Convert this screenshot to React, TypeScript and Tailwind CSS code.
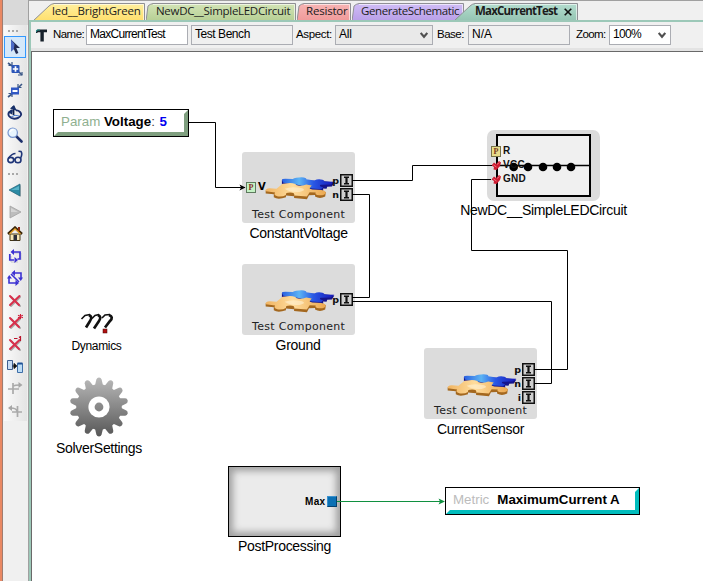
import React from "react";

type Kids = { children?: React.ReactNode };

const fontUi = "font-['Open_Sans','Noto_Sans',sans-serif]";
const fontArial = "font-['Liberation_Sans',Arial,sans-serif]";

/* ---------- tabs ---------- */

function Tab({ id, w, overlap, from, to, label, labelClass, active }: {
  id: string; w: number; overlap: string; from: string; to: string; label: string; labelClass: string; active?: boolean;
}) {
  const slant = id === "t1" || active ? 20 : 6;
  const d = `M0 18 L${slant - 4} 3 Q${slant - 2} 1 ${slant + 1} 0.5 L${w - 1.5} 0.5 L${w - 1.5} 18`;
  return (
    <div className={`relative h-[18px] shrink-0 ${overlap}`}>
      <svg width={w} height="18" className="block">
        <defs>
          <linearGradient id={id} x1="0" y1="0" x2="0" y2="1">
            <stop offset="0" stopColor={from} />
            <stop offset="1" stopColor={to} />
          </linearGradient>
        </defs>
        <path d={d} fill={`url(#${id})`} stroke="#8f8f94" strokeWidth="1" />
        <path d={`M${slant + 1} 1.5 H${w - 2.5} V18`} fill="none" stroke="#fff" strokeOpacity="0.6" />
      </svg>
      <span className={`absolute -top-px whitespace-nowrap text-[11.5px] leading-[18px] text-[#1c1c1c] ${labelClass}`}>{label}</span>
      {active && (
        <svg className="absolute top-[5px] left-[110px]" width="8" height="8" viewBox="0 0 8 8">
          <path d="M0.7 0.7 L7.3 7.3 M7.3 0.7 L0.7 7.3" stroke="#111" strokeWidth="1.6" />
        </svg>
      )}
    </div>
  );
}

function Tabs() {
  return (
    <div className={`flex h-[17px] items-start overflow-hidden pl-[4px] ${fontUi}`}>
      <Tab id="t1" w={113} overlap="" from="#fff0a0" to="#ffdf6c" label="led__BrightGreen" labelClass="left-[19px] tracking-[-0.2px]" />
      <Tab id="t2" w={151} overlap="" from="#d3e4b6" to="#b6cf94" label="NewDC__SimpleLEDCircuit" labelClass="left-[10px] tracking-[-0.3px]" />
      <Tab id="t3" w={55} overlap="" from="#f8b4b4" to="#f09a9a" label="Resistor" labelClass="left-[9px] tracking-[-0.2px]" />
      <Tab id="t4" w={113} overlap="" from="#d0bdf6" to="#b99fe8" label="GenerateSchematic" labelClass="left-[9px] tracking-[-0.4px]" />
      <Tab id="t5" w={125} overlap="-ml-[11px]" from="#b4ddcf" to="#94c4b2" label="MaxCurrentTest" labelClass="left-[21px] font-bold tracking-[-0.8px]" active />
    </div>
  );
}

/* ---------- property bar ---------- */

function Chevron() {
  return (
    <svg width="8" height="7" viewBox="0 0 8 7" className="mt-[2px] shrink-0">
      <path d="M0.7 1 L4 4.8 L7.3 1" fill="none" stroke="#505050" strokeWidth="2.1" />
    </svg>
  );
}

function Field({ cls, children }: Kids & { cls: string }) {
  return (
    <div className={`flex h-[20px] shrink-0 items-center justify-between border border-[#abadb3] pb-[2px] pl-[3px] ${cls}`}>
      {children}
    </div>
  );
}

function PropertyBar() {
  return (
    <div className={`flex h-[26px] items-center bg-[#f0f0f0] pl-[5px] text-[12px] whitespace-nowrap text-black ${fontArial}`}>
      <svg width="12" height="13" viewBox="0 0 12 13" className="shrink-0">
        <path d="M0 4 V2 Q0 0.5 2 0.5 H11 V3.2 H7.8 V12.5 H4.4 V3.2 H2 L1 4Z" fill="#16202a" />
        <path d="M0 3 L1 1 H4" fill="none" stroke="#2a9c94" />
      </svg>
      <span className="ml-[5px] w-[33px] shrink-0 text-[11.5px] tracking-[-0.55px]">Name:</span>
      <Field cls="w-[102px] bg-white"><span className="tracking-[-0.7px]">MaxCurrentTest</span></Field>
      <Field cls="ml-[3px] w-[102px] bg-[#f0f0f0]"><span className="tracking-[-0.45px]">Test Bench</span></Field>
      <span className="ml-[3px] w-[39px] shrink-0 text-[11.5px] tracking-[-0.35px]">Aspect:</span>
      <Field cls="w-[98px] bg-[#e9e9e9] pr-[4px]"><span className="tracking-[-0.2px]">All</span><Chevron /></Field>
      <span className="ml-[4px] w-[31px] shrink-0 text-[11.5px] tracking-[-0.5px]">Base:</span>
      <Field cls="w-[102px] bg-[#f0f0f0]"><span>N/A</span></Field>
      <span className="ml-[6px] w-[33px] shrink-0 text-[11.5px] tracking-[-0.6px]">Zoom:</span>
      <Field cls="w-[62px] bg-white pr-[4px]"><span className="tracking-[-0.7px]">100%</span><Chevron /></Field>
    </div>
  );
}

/* ---------- left tool strip ---------- */

function Tool({ children, on }: Kids & { on?: boolean }) {
  return (
    <div className={`flex h-[22px] w-[22px] items-center justify-center ${on ? "border border-[#3399ff] bg-[#d5e8fa]" : ""}`}>
      <svg width="16" height="16" viewBox="0 0 16 16" className="shrink-0" fill="none">{children}</svg>
    </div>
  );
}

function Grip() {
  return (
    <div className="flex h-[11px] items-center gap-[2px] pl-[4px]">
      {[0, 1, 2].map((i) => <i key={i} className="h-[2px] w-[2px] bg-[#a8a8a8]" />)}
    </div>
  );
}

function Cross() {
  return (
    <g strokeLinecap="round">
      <path d="M4 5 L13 14 M13 5 L4 14" stroke="#aaa" strokeWidth="2" />
      <path d="M3 4 L12 13 M12.5 4 L3 13" stroke="#d8304c" strokeWidth="2" />
    </g>
  );
}

function Cycle() {
  return (
    <g>
      <path d="M6 5 H14 V12 M11 14 H4 V8" stroke="#c4c4d0" strokeWidth="1" />
      <g stroke="#3c32d2" strokeWidth="1.7">
        <path d="M5 4 H13 V11 H10.5" />
        <path d="M7 12 H2.8 V6" />
        <path d="M7 1 L3.5 4 L7 7Z M7.5 9 L11 12 L7.5 15Z" fill="#3c32d2" stroke="none" />
      </g>
    </g>
  );
}

function ToolStrip() {
  return (
    <div className="flex w-[23px] flex-col bg-gradient-to-r from-[#fafafa] to-[#e4e4e4]">
      <Grip />
      <Tool on>
        <path d="M4 0.5 V12.5 L6.8 10 L9 15 L11.4 13.9 L9.3 9 H13Z" fill="#222b52" />
        <path d="M4 0.5 V12.5 L6.8 10 L7.5 5Z" fill="#4c6cc8" />
      </Tool>
      <Tool>
        <path d="M1 2 L5 5 M12 11 L15 14" stroke="#3a5686" strokeWidth="1.6" />
        <path d="M5 1 V4.5 H1.5 M15 11 V14 H11" stroke="#3a5686" strokeWidth="1.2" />
        <rect x="4.5" y="4" width="8" height="8" rx="1" fill="#2b55b8" /><path d="M8.5 5.3 V10.7 M5.8 8 H11.2" stroke="#fff" strokeWidth="1.7" />
      </Tool>
      <Tool>
        <path d="M1 14 L5 11 M11 5 L15 1" stroke="#3a5686" strokeWidth="1.6" />
        <path d="M1.5 10.5 H5 V14 M11 1 V4.5 H14.5" stroke="#3a5686" strokeWidth="1.2" />
        <rect x="4" y="4.5" width="8" height="7" fill="#3158c4" /><path d="M5.5 8 H10.5" stroke="#fff" strokeWidth="2" />
      </Tool>
      <Tool>
        <path d="M5 5 Q0 8 2 11 Q5 15 11 13 Q16 10 13 7 Q11 5 9 5.5" stroke="#1b2e6e" strokeWidth="1.9" />
        <path d="M6.5 1 V10" stroke="#10204a" strokeWidth="1.8" />
        <path d="M3 3.5 L7 0 L10 6Z M0.5 7 L6 5 L5 9.5Z" fill="#17306a" />
        <path d="M4 12 Q8 9 12 11" stroke="#4a7cd0" />
      </Tool>
      <Tool>
        <path d="M9 9 L14.5 14.5" stroke="#1c2e6a" strokeWidth="2.6" strokeLinecap="round" />
        <circle cx="5.7" cy="5.7" r="4.7" fill="#e8f5ff" stroke="#7795cf" strokeWidth="1.2" />
        <path d="M3 5 Q4 2.5 6.5 2.6" stroke="#fff" strokeWidth="1.5" />
      </Tool>
      <Tool>
        <g stroke="#1f3578" strokeWidth="1.6">
          <ellipse cx="3.8" cy="11" rx="2.9" ry="2.6" /><ellipse cx="11" cy="11" rx="3" ry="2.7" />
          <path d="M1.6 9 Q5 4.5 8.5 4.5 M13.5 9.5 Q15.8 5 14 2.5 L11.5 2.2 M6.7 10.5 H8" />
        </g>
      </Tool>
      <Grip />
      <Tool>
        <path d="M14 3 V15 L3 8.5Z" fill="#b7b7b7" />
        <path d="M13 2 V14 L2 8Z" fill="#2c8aa4" stroke="#24667c" strokeWidth="0.7" /><path d="M12 4 L4 8 H12Z" fill="#58b3c8" />
      </Tool>
      <Tool><path d="M3 2 V14 L14 8Z" fill="#bdbdbd" stroke="#a2a2a2" strokeWidth="0.8" /><path d="M4 4 L11 8 H4Z" fill="#d5d5d5" /></Tool>
      <Tool>
        <path d="M3 8 H13 V14.5 H3Z" fill="#f7e8b5" stroke="#433415" />
        <path d="M1 8 L8 1.5 L15 8" stroke="#3a2508" strokeWidth="2.4" /><path d="M2.5 8 L8 3 L13.5 8" stroke="#e7a52c" strokeWidth="1.3" />
        <path d="M12 1 V5" stroke="#8b2a13" strokeWidth="2" /><rect x="6.5" y="9" width="3.5" height="5.5" fill="#2d303a" />
      </Tool>
      <Tool><Cycle /></Tool>
      <Tool>
        <g stroke="#3c32d2" strokeWidth="1.6">
          <path d="M7 3 H14 V9 M9 13 H2 V8 M4 4 L12 12" />
          <path d="M8 0 L4.5 3 L8 6Z M8.5 10 L12 13 L8.5 16Z M0 8.5 L2.2 5 L5 8.5Z M11 7.5 L13.8 11 L16 7.5Z" fill="#3c32d2" stroke="none" />
        </g>
      </Tool>
      <Tool><Cross /></Tool>
      <Tool><Cross /><path d="M13.5 0 V5 M11 1.2 L16 3.8 M16 1.2 L11 3.8" stroke="#d01b38" strokeWidth="1.1" /></Tool>
      <Tool><Cross /><path d="M7 2.5 H10.5 M12 1.5 L13.5 0.5 V5" stroke="#b8142c" strokeWidth="1.2" /></Tool>
      <Tool>
        <path d="M0.5 2.5 H5.5 V11.5 H0.5Z" fill="#c8dcf4" stroke="#3e5e90" /><path d="M10.5 5.5 H15.5 V14.5 H10.5Z" fill="#bcdcf6" stroke="#3e6ea8" />
        <path d="M10.5 5.5 H15.5" stroke="#1d4f94" strokeWidth="2" />
        <path d="M5.5 8 H9 M7 5.5 L9.8 8 L7 10.5Z" stroke="#111" fill="#111" />
      </Tool>
      <Tool><path d="M1 9 H12 M6 3 V14 M6 6 Q8 5 13 5" stroke="#aaa" strokeWidth="1.7" /><path d="M11.5 2 L15.5 5 L11.5 8Z" fill="#a6a6a6" /></Tool>
      <Tool><path d="M4 6 Q9 6 10 9 M5 10 H15 M10.5 4 V15" stroke="#aaa" strokeWidth="1.7" /><path d="M5 3 L1 6 L5 9Z" fill="#a6a6a6" /></Tool>
    </div>
  );
}

/* ---------- diagram parts ---------- */

function Puzzle({ top }: { top: string }) {
  return (
    <svg className={`absolute left-[23px] ${top}`} width="70" height="23" viewBox="0 0 207 68">
      <defs>
        <linearGradient id="pzBlue" x1="0" x2="1"><stop offset="0" stopColor="#2a5fe0" /><stop offset="0.33" stopColor="#5cb4f4" /><stop offset="0.6" stopColor="#2a58e4" /><stop offset="1" stopColor="#1616b8" /></linearGradient>
        <linearGradient id="pzGold" x1="0" x2="1"><stop offset="0" stopColor="#f0b462" /><stop offset="0.45" stopColor="#ffdc9c" /><stop offset="1" stopColor="#eba850" /></linearGradient>
      </defs>
      <path d="M50 8 V22 L100 34 L144 40 L172 42 L172 34 L182 35 L184 29 L198 28 L205 16 L170 12 Z" fill="#15158c" />
      <path d="M50 9 Q50 5 60 5 L82 6 Q90 1 108 1 Q124 2 122 7 L146 10 Q156 5 170 8 Q178 11 174 13 L205 14 L194 22 L164 23 Q158 28 172 30 L166 36 L140 34 L100 24 L54 17 Z" fill="url(#pzBlue)" />
      <path d="M2 40 V49 L26 51 V60 Q38 68 62 60 V55 L86 57 V62 L124 66 L130 54 L148 53 V58 Q162 66 178 58 L180 44 Z" fill="#a4681f" />
      <path d="M2 42 Q0 34 14 33 L34 35 L52 20 L74 18 Q92 19 92 24 Q106 29 122 22 L138 25 L134 30 Q128 34 140 37 L156 38 Q180 38 180 47 Q176 55 160 54 Q146 53 150 46 L132 45 L124 58 L86 55 Q90 46 74 46 Q60 46 62 53 Q52 59 36 57 Q24 54 30 46 Z" fill="url(#pzGold)" />
      <path d="M58 35 Q78 27 110 33 Q124 39 102 44 Q76 47 58 35Z" fill="#fff2d4" opacity="0.6" />
    </svg>
  );
}

function Pin({ name, top }: { name: string; top: string }) {
  return (
    <div className={`absolute right-[2px] flex h-[13px] items-center gap-[1px] ${top}`}>
      <span className="pb-[1px] text-[9.5px] leading-[13px] font-bold text-[#111] font-['DejaVu_Sans',sans-serif]">{name}</span>
      <svg width="13" height="13" viewBox="0 0 13 13">
        <rect x="0.75" y="0.75" width="11.5" height="11.5" fill="#cfcfcf" stroke="#111" strokeWidth="1.5" />
        <path d="M4 3.2 H9 M4 9.8 H9" stroke="#111" strokeWidth="1.6" />
        <path d="M6.5 3 V10" stroke="#111" strokeWidth="2.2" />
      </svg>
    </div>
  );
}

function Component({ pos, puzzleTop, children }: Kids & { pos: string; puzzleTop: string }) {
  return (
    <div className={`absolute h-[71px] w-[113px] rounded-[3px] bg-[#dcdcdc] ${pos}`}>
      <Puzzle top={puzzleTop} />
      {children}
      <span className="absolute top-[56px] left-[10px] text-[11px] leading-[14px] tracking-[0.3px] whitespace-nowrap text-[#222] font-['DejaVu_Sans',sans-serif]">Test Component</span>
    </div>
  );
}

function Caption({ pos, children }: Kids & { pos: string }) {
  return <span className={`absolute -translate-x-1/2 text-[14px] leading-[16px] tracking-[-0.3px] whitespace-nowrap text-black ${pos}`}>{children}</span>;
}

function PBox({ cls }: { cls: string }) {
  return <span className={`absolute flex h-[11px] w-[10px] items-center justify-center border font-['Liberation_Serif',serif] text-[8px] leading-none font-bold ${cls}`}>P</span>;
}

function Gear() {
  return (
    <svg className="absolute top-[325px] left-[37px]" width="60" height="60" viewBox="-30 -30 60 60">
      <defs>
        <linearGradient id="gear" gradientUnits="userSpaceOnUse" x1="0" y1="-29" x2="0" y2="29"><stop offset="0" stopColor="#b8b8b8" /><stop offset="1" stopColor="#585858" /></linearGradient>
        <mask id="gearMask" maskUnits="userSpaceOnUse" x="-30" y="-30" width="60" height="60">
          <circle r="22.8" fill="#fff" />
          {Array.from({ length: 14 }, (_, i) => (
            <path key={i} d="M-4.2 -21 L-2.6 -27.5 Q-2 -29.4 0 -29.4 Q2 -29.4 2.6 -27.5 L4.2 -21Z" fill="#fff" transform={`rotate(${(i * 360) / 14})`} />
          ))}
          <circle r="10.6" fill="#000" />
          <circle r="4.4" fill="#fff" />
        </mask>
      </defs>
      <rect x="-30" y="-30" width="60" height="60" fill="url(#gear)" mask="url(#gearMask)" />
    </svg>
  );
}

function Canvas() {
  return (
    <div className={`relative min-h-0 flex-1 overflow-hidden bg-white ${fontArial}`}>
      {/* parameter */}
      <div className="absolute top-[57px] left-[21px] h-[28px] w-[136px] border border-black">
        <div className="h-full w-full border-4 border-t-transparent border-r-[#7f9f7f] border-b-[#7f9f7f] border-l-transparent">
          <div className="-mt-px pl-[3px] text-[13.33px] leading-[18px] whitespace-nowrap">
            <span className="text-[#8fb08f]">Param</span> <b>Voltage</b><span className="mr-px text-[#444]">:</span> <b className="text-[#0000f0]">5</b>
          </div>
        </div>
      </div>

      <Component pos="top-[100px] left-[210px]" puzzleTop="top-[25px]">
        <PBox cls="top-[30px] left-[4px] border-[#5e7a5e] bg-[#c4f2c4] text-[#8a2a2a]" />
        <span className="absolute top-[28px] left-[16px] text-[10px] leading-[13px] font-bold font-['DejaVu_Sans',sans-serif]">V</span>
        <Pin name="p" top="top-[22px]" />
        <Pin name="n" top="top-[36px]" />
      </Component>
      <Caption pos="top-[173px] left-[266.5px]">ConstantVoltage</Caption>

      <Component pos="top-[212px] left-[210px]" puzzleTop="top-[26px]">
        <Pin name="p" top="top-[29px]" />
      </Component>
      <Caption pos="top-[285px] left-[266px]">Ground</Caption>

      <Component pos="top-[296px] left-[392px]" puzzleTop="top-[26px]">
        <Pin name="p" top="top-[15px]" />
        <Pin name="n" top="top-[29px]" />
        <Pin name="i" top="top-[43px]" />
      </Component>
      <Caption pos="top-[369px] left-[448.5px]">CurrentSensor</Caption>

      {/* LED circuit */}
      <div className="absolute top-[78px] left-[455px] h-[71px] w-[113px] rounded-[7px] bg-[#dcdcdc]">
        <div className="absolute top-[4px] left-[9px] h-[63px] w-[95px] border-2 border-black bg-[#f0f0f0]" />
        <svg className="absolute inset-0" width="113" height="71">
          <path d="M9 35.5 H104" stroke="#000" strokeWidth="1.3" />
          {[26.7, 41, 56, 70, 84].map((x) => <circle key={x} cx={x} cy="37" r="4.3" />)}
          {[35.5, 49.5].map((y) => (
            <g key={y} transform={`translate(9.5 ${y})`}>
              <path d="M-5 0 L-2.5 -3 L-0.5 -1.5 L2.5 -4.5 L4.5 -3 L3.5 0.5 L0 4.5 L-3 4 L-2.5 1.5 Z" fill="#cc1a30" />
              <path d="M-3 -0.5 L0 1.5 M0.5 -1 L3 -3" stroke="#f28a90" strokeWidth="0.8" />
            </g>
          ))}
        </svg>
        <PBox cls="top-[16px] left-[4px] border-[#77734a] bg-[#e8dc8a] text-[#7a3a20]" />
        <div className="absolute top-[14px] left-[16px] flex flex-col text-[10px] leading-[14px] font-bold tracking-[0.3px] text-[#111]">
          <span>R</span><span>VCC</span><span>GND</span>
        </div>
      </div>
      <Caption pos="top-[150px] left-[511.5px]">NewDC__SimpleLEDCircuit</Caption>

      {/* dynamics */}
      <svg className="absolute top-[260px] left-[48px]" width="35" height="22" viewBox="0 0 35 22">
        <g fill="none" stroke="#111" strokeWidth="1.6">
          <path d="M1.5 7 L5 3.5 L10 2.5" />
          <path d="M12 6.5 L15 3.5 L19 2.5" />
          <path d="M22 6 L25 3 L30 2.5" />
        </g>
        <g fill="none" stroke="#111" strokeWidth="2.7">
          <path d="M9 3 Q13 5 10 9 L6 15.5" />
          <path d="M18 3 Q22 5 19 9 L14 16.5" />
          <path d="M29 3 Q34 5 30 9 L25 15.5" />
        </g>
        <rect x="23" y="17" width="4" height="4" fill="#b01010" stroke="#400" strokeWidth="0.5" />
      </svg>
      <span className="absolute top-[286px] left-[64.5px] -translate-x-1/2 text-[12px] leading-[16px] tracking-[-0.35px]">Dynamics</span>

      <Gear />
      <Caption pos="top-[388px] left-[67px]">SolverSettings</Caption>

      {/* post processing */}
      <div className="absolute top-[414px] left-[196px] h-[71px] w-[113px] border border-black bg-[#ebebeb] shadow-[inset_0_0_7px_4px_#a0a0a0]">
        <span className="absolute top-[28px] left-[76px] text-[10px] leading-[13px] font-bold tracking-[0.3px]">Max</span>
        <span className="absolute top-[29px] left-[98px] h-[11px] w-[10px] border border-t-[#3b90cc] border-r-[#07406c] border-b-[#07406c] border-l-[#3b90cc] bg-[#0a70b4]" />
      </div>
      <Caption pos="top-[486px] left-[252.5px]">PostProcessing</Caption>

      {/* metric */}
      <div className="absolute top-[435px] left-[413px] h-[28px] w-[195px] border border-black">
        <div className="h-full w-full border-4 border-t-transparent border-r-[#00bcbc] border-b-[#00bcbc] border-l-transparent">
          <div className="-mt-px flex gap-[8px] pl-[3px] text-[13.33px] leading-[18px] whitespace-nowrap">
            <span className="text-[#bcbcbc]">Metric</span><b>MaximumCurrent A</b>
          </div>
        </div>
      </div>

      {/* connections */}
      <svg className="absolute inset-0" width="671" height="529" fill="none">
        <g transform="translate(-32 -52)">
          <g stroke="#000" strokeWidth="1">
            <path d="M189 122.5 H215.5 V187.5 H245" />
            <path d="M352 180.5 H412.5 V165.5 H492" />
            <path d="M352 194.5 H369.5 V297.5 H352" />
            <path d="M352 301.5 H551.5 V383.5 H534" />
            <path d="M534 369.5 H567.5 V250.5 H471.5 V179.5 H491" />
          </g>
          <path d="M239.5 184.5 L245.5 187.5 L239.5 190.5 L241 187.5Z" fill="#000" />
          <path d="M337 501.5 H444" stroke="#109040" />
          <path d="M438.5 498.5 L445 501.5 L438.5 504.5 L440 501.5Z" fill="#109040" />
        </g>
      </svg>
    </div>
  );
}

export default function App() {
  return (
    <div className="flex h-[581px] w-[703px] overflow-hidden bg-[#f0f0f0]">
      <div className="w-[2px] bg-[#e98863]" />
      <div className="flex w-[26px] flex-col border-l border-[#a07c70] bg-[#f0f0f0]">
        <div className="h-[25px] bg-[#d9d9d9]" />
        <div className="flex pl-px"><ToolStrip /></div>
      </div>
      <div className="flex min-w-0 flex-1 flex-col border-t border-l border-[#a0a0a0]">
        <div className="bg-[#f0f0f0] pt-[2px]"><Tabs /></div>
        <div className="flex min-h-0 flex-1 flex-col border-t-2 border-l-2 border-[#9cc8b8]">
          <PropertyBar />
          <div className="h-[3px] bg-[#e3e3e3]" />
          <div className="flex min-h-0 flex-1 flex-col border-t border-l border-[#696969]"><Canvas /></div>
        </div>
      </div>
    </div>
  );
}
